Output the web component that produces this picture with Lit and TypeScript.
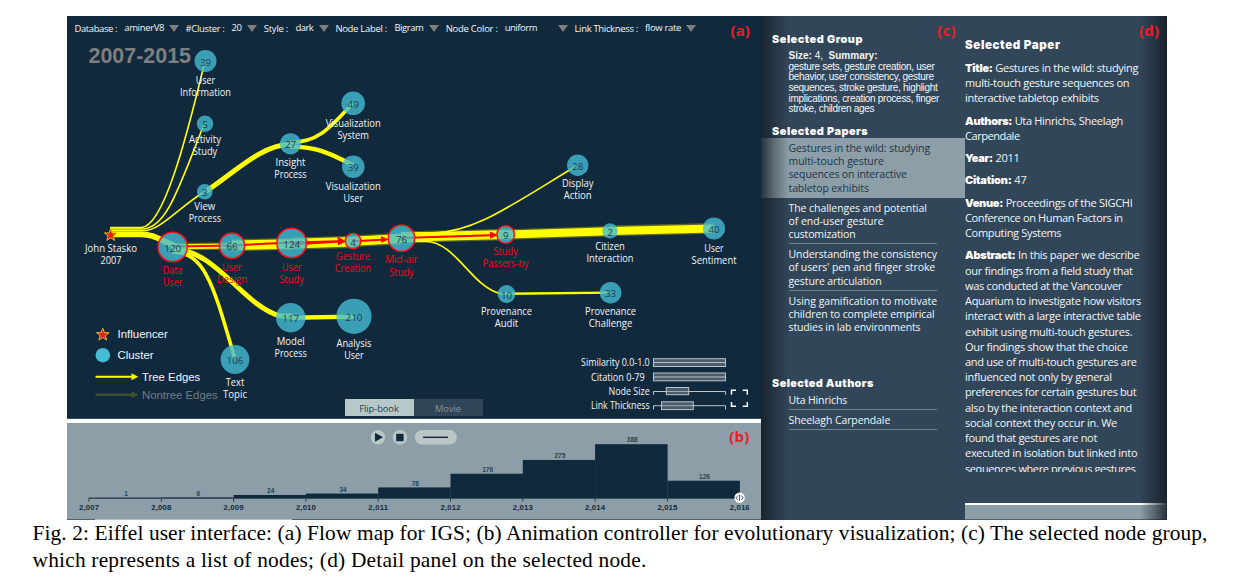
import { LitElement, html, svg, css } from 'lit';
import { customElement, property, query } from 'lit/decorators.js';

type Line = [string, number];

interface ClusterNode {
    n: number;
    x: number;
    y: number;
    r: number;
    label: Line[];
    labelY: number;
    selected?: boolean;
}

const filters = [
    { label: 'Database :', lw: 42.7, value: 'aminerV8', vw: 40, cell: 44.5, gap: 7 },
    { label: '#Cluster :', lw: 39, value: '20', vw: 10, cell: 15.5, gap: 7 },
    { label: 'Style :', lw: 24.3, value: 'dark', vw: 17.7, cell: 23, gap: 7.5 },
    { label: 'Node Label :', lw: 51.5, value: 'Bigram', vw: 29, cell: 34.5, gap: 7.5 },
    { label: 'Node Color :', lw: 52, value: 'uniform', vw: 32.3, cell: 53, gap: 7 },
    { label: 'Link Thickness :', lw: 63.5, value: 'flow rate', vw: 36, cell: 41.5, gap: 7 },
];

const nodes: ClusterNode[] = [
    { n: 39, x: 205.5, y: 61, r: 11, label: [['User', 19.5], ['Information', 51]], labelY: 84.3 },
    { n: 5, x: 205, y: 123.7, r: 8.2, label: [['Activity', 32], ['Study', 24.5]], labelY: 142.7 },
    { n: 3, x: 204.8, y: 191.7, r: 7.8, label: [['View', 21], ['Process', 32.3]], labelY: 210.3 },
    { n: 27, x: 290.5, y: 143.8, r: 10.6, label: [['Insight', 30], ['Process', 32.3]], labelY: 166 },
    { n: 49, x: 353.2, y: 103.3, r: 11.8, label: [['Visualization', 55], ['System', 31.5]], labelY: 126.7 },
    { n: 39, x: 353.3, y: 166.7, r: 11.3, label: [['Visualization', 55], ['User', 19.5]], labelY: 189.5 },
    { n: 28, x: 577.7, y: 165.3, r: 10.7, label: [['Display', 31.5], ['Action', 28]], labelY: 187 },
    { n: 120, x: 172.7, y: 247, r: 14.7, label: [['Data', 20], ['User', 19.5]], labelY: 274.3, selected: true },
    { n: 66, x: 232, y: 245.7, r: 12.6, label: [['User', 19.5], ['Design', 30]], labelY: 270.7, selected: true },
    { n: 124, x: 291.7, y: 243, r: 14.8, label: [['User', 19.5], ['Study', 24.5]], labelY: 270.9, selected: true },
    { n: 4, x: 353, y: 241, r: 7.8, label: [['Gesture', 34], ['Creation', 36.5]], labelY: 260.2, selected: true },
    { n: 76, x: 401.5, y: 238.2, r: 13.2, label: [['Mid-air', 32.5], ['Study', 24.5]], labelY: 263.4, selected: true },
    { n: 9, x: 505.7, y: 234.5, r: 8.8, label: [['Study', 24.5], ['Passers-by', 46]], labelY: 254.8, selected: true },
    { n: 2, x: 610, y: 230.9, r: 7.7, label: [['Citizen', 29.5], ['Interaction', 47]], labelY: 249.6 },
    { n: 40, x: 714, y: 228.4, r: 11, label: [['User', 19.5], ['Sentiment', 45]], labelY: 251.7 },
    { n: 10, x: 506.5, y: 294, r: 8.9, label: [['Provenance', 51], ['Audit', 23.5]], labelY: 314.5 },
    { n: 33, x: 610.6, y: 292.7, r: 10.8, label: [['Provenance', 51], ['Challenge', 43.5]], labelY: 315.3 },
    { n: 117, x: 290.7, y: 317.7, r: 14.7, label: [['Model', 28], ['Process', 32.3]], labelY: 345.2 },
    { n: 210, x: 354, y: 316.3, r: 17.6, label: [['Analysis', 35], ['User', 19.5]], labelY: 347.2 },
    { n: 106, x: 235, y: 359.5, r: 14.4, label: [['Text', 18.5], ['Topic', 24]], labelY: 386.3 },
];

// [path, stroke width]
const edges: Line[] = [
    ['M110 227.6 H141 C163 228 186 140 205 61', 1.6],
    ['M110 229 H142 C166 229 178 190 204.5 123', 1.6],
    ['M110 230.8 H143 C160 231 178 208 204 192', 1.6],
    ['M205 192 C235 172 262 144.5 290 144.5', 5],
    ['M290 142.5 C318 142.5 330 128 353 103', 3.6],
    ['M290 146.6 C318 146.6 330 154 353 165', 4.4],
    ['M110 234.3 H141 C156 234.3 160 241 180 248', 5.8],
    ['M172 249 C216 249 243 306 280 316 H292', 5],
    ['M172 252 C206 252 214 288 235 359', 3.6],
    ['M290 317.8 L354 316.6', 4.4],
    ['M401 233 H433 C475 232 510 206 577 165.5', 1.6],
    ['M401 241.5 H426 C455 241.5 472 287 500 293.5', 1.7],
    ['M500 293.8 L610 292.6', 2.4],
];

// the main stem, left to right
const stem: [number, number, number, number, number][] = [
    [173, 246.8, 232, 246, 5],
    [232, 245.2, 292, 244, 9.6],
    [292, 243.6, 353, 241.8, 9.6],
    [353, 241.2, 401, 238.6, 9],
    [401, 237.3, 506, 234.5, 9],
    [506, 234.5, 610, 231.2, 8],
    [610, 230.9, 714, 228.4, 8],
];

const history = [1, 6, 24, 34, 78, 176, 275, 388, 126];

const papers: Line[][] = [
    [['Gestures in the wild: studying', 141.5], ['multi-touch gesture', 95.3], ['sequences on interactive', 118.3], ['tabletop exhibits', 80.3]],
    [['The challenges and potential', 138.3], ['of end-user gesture', 95], ['customization', 67]],
    [['Understanding the consistency', 148.3], ["of users' pen and finger stroke", 146.7], ['gesture articulation', 93]],
    [['Using gamification to motivate', 148.7], ['children to complete empirical', 146], ['studies in lab environments', 132]],
];

const details: { key: string; lines: Line[] }[] = [
    { key: 'Title:', lines: [[' Gestures in the wild: studying', 173.3], ['multi-touch gesture sequences on', 164.3], ['interactive tabletop exhibits', 133.7]] },
    { key: 'Authors:', lines: [[' Uta Hinrichs, Sheelagh', 158], ['Carpendale', 54.7]] },
    { key: 'Year:', lines: [[' 2011', 54.5]] },
    { key: 'Citation:', lines: [[' 47', 61.5]] },
    { key: 'Venue:', lines: [[' Proceedings of the SIGCHI', 167.5], ['Conference on Human Factors in', 157.7], ['Computing Systems', 96.3]] },
    {
        key: 'Abstract:', lines: [
            [' In this paper we describe', 174.3],
            ['our findings from a field study that', 167.7],
            ['was conducted at the Vancouver', 157],
            ['Aquarium to investigate how visitors', 176],
            ['interact with a large interactive table', 175.7],
            ['exhibit using multi-touch gestures.', 167.3],
            ['Our findings show that the choice', 162.7],
            ['and use of multi-touch gestures are', 171.7],
            ['influenced not only by general', 146.7],
            ['preferences for certain gestures but', 171.3],
            ['also by the interaction context and', 167],
            ['social context they occur in. We', 152],
            ['found that gestures are not', 132],
            ['executed in isolation but linked into', 172.3],
            ['sequences where previous gestures', 170.3],
        ],
    },
];

// One line of text, tracked so that it fills the given width
@customElement('fit-line')
export class FitLine extends LitElement {
    static styles = css`
        :host {
            display: block;
            white-space: pre;
        }
        .inner {
            display: inline-block;
        }
    `;

    @property({ type: Number }) width = 0;
    @query('.inner') inner!: HTMLElement;

    firstUpdated() {
        const natural = this.inner.getBoundingClientRect().width;
        const count = (this.textContent || '').length;
        if (this.width && count) {
            this.style.letterSpacing = `${(this.width - natural) / count}px`;
        }
    }

    render() {
        return html`<span class="inner"><slot></slot></span>`;
    }
}

@customElement('flow-map')
export class FlowMap extends LitElement {
    static styles = css`
        :host {
            display: flex;
            flex-direction: column;
            position: relative;
            height: 403px;
            background: #11293d;
            border-bottom: 1px solid #3b4c5b;
            box-sizing: border-box;
            color: #f2f5f7;
            font-family: 'Open Sans', 'Noto Sans', sans-serif;
        }
        .toolbar {
            display: flex;
            height: 24px;
            padding-left: 7.5px;
            font-size: 9.5px;
            line-height: 25px;
            flex: none;
        }
        .filter {
            display: flex;
            align-items: flex-start;
            margin-right: 6.8px;
        }
        .value {
            margin-top: -0.7px;
        }
        .arrow {
            margin-top: 9px;
            border: 5px solid transparent;
            border-top: 7px solid #7e7e7e;
            border-bottom: 0;
        }
        svg {
            display: block;
            width: 694px;
            height: 378px;
            flex: none;
        }
        text {
            fill: #f2f5f7;
            font-size: 10.1px;
        }
        .edge {
            fill: none;
            stroke: #ffff00;
        }
        .ghost {
            stroke: #5c6626;
        }
        .disc {
            fill: #45bcd3;
            fill-opacity: 0.8;
        }
        .disc.selected {
            stroke: #f5141c;
            stroke-width: 1.6;
        }
        .count {
            fill: #17414f;
            text-anchor: middle;
            font-size: 9.8px;
        }
        .name {
            text-anchor: middle;
        }
        .name.selected {
            fill: #f00c16;
        }
        .route {
            stroke: #ff0000;
            stroke-width: 2;
            fill: none;
        }
        .head {
            fill: #ff0000;
        }
        .period {
            fill: #7f7f7f;
            font: bold 21.3px 'Liberation Sans', Arial, sans-serif;
        }
        .legend {
            font: 11.8px 'Liberation Sans', Arial, sans-serif;
        }
        .legend.off {
            fill: #747d84;
        }
        .tag {
            fill: #ee1c25;
            font-size: 15px;
            font-weight: 700;
        }
        .star {
            fill: #e32219;
            stroke: #e9b52c;
            stroke-width: 1;
        }
        .track {
            fill: none;
            stroke: #b9c4cb;
        }
        .thumb {
            fill: #7f8f9b;
            fill-opacity: 0.5;
            stroke: #b9c4cb;
        }
        .corner {
            fill: none;
            stroke: #ffffff;
            stroke-width: 1.5;
        }
        .modes {
            position: absolute;
            left: 277.5px;
            top: 382.7px;
            display: flex;
        }
        .mode {
            width: 69px;
            height: 17.3px;
            display: flex;
            justify-content: center;
            font-size: 9.4px;
            line-height: 19px;
            background: #314559;
            color: #8292a1;
        }
        .mode.active {
            background: #b7c8c8;
            color: #26404f;
        }
    `;

    renderNode(d: ClusterNode) {
        const cls = d.selected ? 'selected' : '';
        return svg`
            <circle class="disc ${cls}" cx=${d.x} cy=${d.y} r=${d.r}></circle>
            <text class="count" x=${d.x} y=${d.y + 4.6}>${d.n}</text>
            ${d.label.map(([t, w], i) => svg`
                <text class="name ${cls}" x=${d.x} y=${d.labelY + i * 12.1}
                    textLength=${w} lengthAdjust="spacingAndGlyphs">${t}</text>`)}
        `;
    }

    renderText(t: string, x: number, y: number, w: number, cls = '') {
        return svg`<text class=${cls} x=${x} y=${y} textLength=${w} lengthAdjust="spacingAndGlyphs">${t}</text>`;
    }

    renderStar(x: number, y: number) {
        return svg`<path class="star" transform="translate(${x} ${y})"
            d="M0 -6.5 L1.6 -2.1 L6.3 -2 L2.6 0.9 L3.9 5.4 L0 2.8 L-3.9 5.4 L-2.6 0.9 L-6.3 -2 L-1.6 -2.1 Z"></path>`;
    }

    render() {
        return html`
            <div class="toolbar">
                ${filters.map(f => html`
                    <div class="filter">
                        <fit-line .width=${f.lw} style="width:${f.lw + f.gap}px">${f.label}</fit-line>
                        <fit-line class="value" .width=${f.vw} style="width:${f.cell}px">${f.value}</fit-line>
                        <div class="arrow"></div>
                    </div>`)}
            </div>
            <svg viewBox="67 40 694 378" overflow="visible">
                ${this.renderText('2007-2015', 88.5, 62.7, 102.5, 'period')}
                ${this.renderText('(a)', 730.5, 35.6, 19.5, 'tag')}
                ${stem.map(([x1, y1, x2, y2, w]) => svg`
                    <line class="ghost" x1=${x1} y1=${y1} x2=${x2} y2=${y2} stroke-width=${w + 2.6}></line>`)}
                ${edges.map(([d, w]) => svg`<path class="edge" d=${d} stroke-width=${w}></path>`)}
                ${stem.map(([x1, y1, x2, y2, w]) => svg`
                    <line class="edge" x1=${x1} y1=${y1} x2=${x2} y2=${y2} stroke-width=${w}></line>`)}
                <path class="route" d="M173 246.5 L232 245.4 L292 242.4 L340 241.2 M292 244.4 L340 241.6"></path>
                <path class="route" d="M353 241.2 L382 239.8 M401 238 L491 235.3"></path>
                <path class="head" d="M337.5 236.5 L346 241.2 L338 245.5 Z"></path>
                <path class="head" d="M381 236 L388.5 239.5 L381.3 243 Z"></path>
                <path class="head" d="M490 231.4 L498 235 L490 238.8 Z"></path>
                ${nodes.map(d => this.renderNode(d))}
                ${this.renderStar(110.7, 235)}
                ${this.renderText('John Stasko', 85, 252.3, 52, '')}
                ${this.renderText('2007', 100.5, 264.4, 21, '')}

                ${this.renderStar(102.8, 334.7)}
                ${this.renderText('Influencer', 117.5, 337.8, 50.3, 'legend')}
                <circle cx="102.8" cy="355.2" r="7.3" fill="#45bcd3"></circle>
                ${this.renderText('Cluster', 117.5, 359.3, 36, 'legend')}
                <path class="edge" d="M95.5 376.8 H133" stroke-width="2"></path>
                <path d="M131.5 373.3 L138.3 376.8 L131.5 380.3 Z" fill="#ffff00"></path>
                ${this.renderText('Tree Edges', 142, 381, 58.3, 'legend')}
                <path class="ghost" d="M95.5 394.8 H133" stroke-width="2" opacity="0.75"></path>
                <path d="M131.5 391.3 L138.3 394.8 L131.5 398.3 Z" fill="#46532b"></path>
                ${this.renderText('Nontree Edges', 142, 398.7, 75.7, 'legend off')}

                ${this.renderText('Similarity 0.0-1.0', 581, 366.2, 68.7)}
                ${this.renderText('Citation 0-79', 591, 380.6, 53.7)}
                ${this.renderText('Node Size', 608.5, 395, 41.2)}
                ${this.renderText('Link Thickness', 591, 409.3, 58.7)}
                <rect class="thumb" x="653.5" y="358.7" width="72" height="7.8"></rect>
                <path class="track" d="M653.5 362.5 H725.5"></path>
                <rect class="thumb" x="653.5" y="373" width="72" height="7.8"></rect>
                <path class="track" d="M653.5 377 H725.5"></path>
                <path class="track" d="M653.5 394.8 V391.5 H725.5 V394.8"></path>
                <rect class="thumb" x="666.3" y="387.5" width="22.4" height="7.2"></rect>
                <path class="track" d="M653.5 409.5 V405.7 H725.5 V409.5"></path>
                <rect class="thumb" x="661.5" y="401.8" width="31.8" height="7.8"></rect>
                <path class="corner" d="M731.5 394.8 V390.3 H736 M742.8 390.3 H747.3 V394.8 M747.3 402 V406.3 H742.8 M736 406.3 H731.5 V402"></path>
            </svg>
            <div class="modes">
                <div class="mode active"><fit-line .width=${39.5}>Flip-book</fit-line></div>
                <div class="mode"><fit-line .width=${26}>Movie</fit-line></div>
            </div>
        `;
    }
}

@customElement('time-line')
export class TimeLine extends LitElement {
    static styles = css`
        :host {
            display: block;
            height: 97px;
            background: #8c9fa8;
        }
        svg {
            display: block;
            width: 694px;
            height: 97px;
        }
        .bar {
            fill: #11293d;
        }
        .axis {
            fill: none;
            stroke: #2c4353;
        }
        .knob {
            fill: #b9c8c7;
        }
        text {
            fill: #14293b;
            text-anchor: middle;
            font-family: 'Liberation Sans', Arial, sans-serif;
        }
        .num {
            font-size: 6.6px;
            font-weight: bold;
            fill: #2a3f4f;
        }
        .year {
            font-size: 7.8px;
            font-weight: bold;
        }
        .tag {
            fill: #ee1c25;
            font: 700 15px 'Open Sans', sans-serif;
        }
    `;

    render() {
        const x0 = 89;
        const step = 72.3;
        return html`
            <svg viewBox="67 423 694 97">
                ${history.map((n, i) => {
                    const h = Math.max(n * 0.1395, 0.6);
                    return svg`
                        <rect class="bar" x=${x0 + i * step} y=${498.3 - h} width=${step + 0.2} height=${h}></rect>
                        <text class="num" x=${x0 + (i + 0.5) * step + 1} y=${496.4 - h}>${n}</text>`;
                })}
                <path class="axis" d="M89 498.3 H740"></path>
                ${Array.from({ length: 10 }, (_, i) => svg`
                    <path class="axis" d="M${x0 + i * step} 497.8 v4"></path>
                    <text class="year" x=${x0 + i * step} y="509.6"
                        textLength="20">${(2007 + i).toLocaleString('en-US')}</text>`)}
                <circle class="knob" cx="378" cy="437.3" r="7.2"></circle>
                <path class="bar" d="M375 432.8 L383 437.3 L375 441.8 Z"></path>
                <circle class="knob" cx="400" cy="437.3" r="7.2"></circle>
                <rect class="bar" x="396.2" y="433.8" width="7.4" height="7.4"></rect>
                <rect class="knob" x="414.8" y="430" width="42" height="14.6" rx="7.3"></rect>
                <path d="M423 437.3 H448" stroke="#11293d" stroke-width="1.4"></path>
                <circle cx="739.6" cy="497.7" r="5.2" fill="#fff"></circle>
                <path d="M738 495.5 L736 497.7 L738 499.9 M741.2 495.5 L743.2 497.7 L741.2 499.9 M739.6 494.7 V500.7"
                    fill="none" stroke="#2c4353" stroke-width="0.9"></path>
                <text class="tag" x="739.3" y="442" textLength="20.3">(b)</text>
                <path d="M67 519.5 H761" stroke="#52646f"></path>
                <path d="M95 519.5 H292" stroke="#b4c0c4"></path>
            </svg>
        `;
    }
}

@customElement('group-panel')
export class GroupPanel extends LitElement {
    static styles = css`
        :host {
            display: block;
            position: relative;
            width: 204px;
            height: 504px;
            box-sizing: border-box;
            padding-top: 16px;
            background: #314659;
            color: #f4f6f8;
            font: 10.5px/13.33px 'Open Sans', 'Noto Sans', sans-serif;
            overflow: hidden;
        }
        .heading {
            height: 14px;
            line-height: 14px;
            padding-left: 11px;
            font-family: Inter, sans-serif;
            font-size: 10.9px;
            font-weight: 900;
            color: #fff;
        }
        .size,
        .summary {
            padding-left: 27.5px;
            font-family: 'Liberation Sans', Arial, sans-serif;
            font-size: 10px;
        }
        .size {
            margin-top: 3.5px;
            line-height: 12px;
        }
        .summary {
            line-height: 10.67px;
            margin-bottom: 9px;
        }
        .item {
            margin-left: 27.5px;
            margin-right: 28px;
            padding: 4.1px 0 1.4px;
            border-bottom: 1px solid #71828f;
        }
        .item.active {
            margin: 0;
            padding: 3.8px 0 2.6px 27.5px;
            border: 0;
            background: #8c9fa8;
            color: #1c3448;
        }
        .item.last {
            border: 0;
        }
        .authors {
            margin-top: 40px;
        }
        .shade {
            position: absolute;
            inset: 0 auto 0 0;
            width: 28px;
            background: linear-gradient(90deg, rgba(20, 28, 36, 0.85), rgba(20, 28, 36, 0.4) 45%, rgba(20, 28, 36, 0));
        }
        .heading,
        .item fit-line {
            position: relative;
            z-index: 1;
        }
        .tag {
            position: absolute;
            left: 176px;
            top: 4px;
            font-size: 15px;
            font-weight: 700;
            line-height: 20px;
            color: #ee1c25;
        }
    `;

    render() {
        const summary: Line[] = [
            ['gesture sets, gesture creation, user', 146],
            ['behavior, user consistency, gesture', 145.3],
            ['sequences, stroke gesture, highlight', 149],
            ['implications, creation process, finger', 150.5],
            ['stroke, children ages', 85.7],
        ];
        const row = ([t, w]: Line) => html`<fit-line .width=${w}>${t}</fit-line>`;
        return html`
            <div class="shade"></div>
            <div class="heading"><fit-line .width=${91}>Selected Group</fit-line></div>
            <div class="size"><fit-line .width=${89}><b>Size:</b> 4,  <b>Summary:</b></fit-line></div>
            <div class="summary">${summary.map(row)}</div>
            <div class="heading"><fit-line .width=${96.3}>Selected Papers</fit-line></div>
            ${papers.map((p, i) => html`
                <div class="item ${i === 0 ? 'active' : ''} ${i === papers.length - 1 ? 'last' : ''}">${p.map(row)}</div>`)}
            <div class="heading authors"><fit-line .width=${101.7}>Selected Authors</fit-line></div>
            <div class="item">${row(['Uta Hinrichs', 58.7])}</div>
            <div class="item">${row(['Sheelagh Carpendale', 101.7])}</div>
            <div class="tag"><fit-line .width=${19}>(c)</fit-line></div>
        `;
    }
}

@customElement('detail-panel')
export class DetailPanel extends LitElement {
    static styles = css`
        :host {
            display: flex;
            flex-direction: column;
            position: relative;
            width: 202px;
            height: 504px;
            box-sizing: border-box;
            padding-top: 21px;
            background: #314659;
            color: #f4f6f8;
            font: 11px/15.22px 'Open Sans', 'Noto Sans', sans-serif;
        }
        .heading,
        b {
            font-family: Inter, sans-serif;
            font-weight: 900;
            color: #fff;
        }
        .heading {
            font-size: 11.6px;
            line-height: 16px;
        }
        b {
            font-size: 11px;
            line-height: 0;
        }
        .body {
            display: flex;
            flex-direction: column;
            gap: 7.1px;
            height: 412.5px;
            margin-top: 6.8px;
            overflow: hidden;
        }
        .field {
            flex: none;
        }
        .field fit-line {
            height: 15.22px;
        }
        .strip {
            height: 14px;
            margin-top: auto;
            background: #8c9fa8;
            border-top: 2.5px solid #fff;
            border-bottom: 1px solid #52646f;
        }
        .shade {
            position: absolute;
            inset: 0 0 0 auto;
            width: 27px;
            background: linear-gradient(270deg, rgba(20, 28, 36, 0.85), rgba(20, 28, 36, 0.45) 45%, rgba(20, 28, 36, 0));
        }
        .tag {
            position: absolute;
            left: 174px;
            top: 4px;
            font-size: 15px;
            font-weight: 700;
            line-height: 20px;
            color: #ee1c25;
        }
    `;

    render() {
        return html`
            <div class="heading"><fit-line .width=${95.5}>Selected Paper</fit-line></div>
            <div class="body">
                ${details.map(d => html`
                    <div class="field">
                        ${d.lines.map(([t, w], i) => html`<fit-line .width=${w}>${i === 0 ? html`<b>${d.key}</b>` : ''}${t}</fit-line>`)}
                    </div>`)}
            </div>
            <div class="strip"></div>
            <div class="shade"></div>
            <div class="tag"><fit-line .width=${20.3}>(d)</fit-line></div>
        `;
    }
}

@customElement('app-root')
export class AppRoot extends LitElement {
    static styles = css`
        :host {
            display: block;
            width: 1236px;
            height: 582px;
            box-sizing: border-box;
            padding-top: 16px;
            background: #fff;
            overflow: hidden;
        }
        .figure {
            display: flex;
            margin-left: 67px;
            height: 504px;
        }
        .left {
            display: flex;
            flex-direction: column;
            justify-content: space-between;
            width: 694px;
        }
        .caption {
            padding-left: 32.5px;
            color: #000;
            font: 21.4px/27px 'Liberation Serif', 'Times New Roman', serif;
        }
    `;

    render() {
        return html`
            <div class="figure">
                <div class="left">
                    <flow-map></flow-map>
                    <time-line></time-line>
                </div>
                <group-panel></group-panel>
                <detail-panel></detail-panel>
            </div>
            <div class="caption">
                <fit-line .width=${1175}>Fig. 2: Eiffel user interface: (a) Flow map for IGS; (b) Animation controller for evolutionary visualization; (c) The selected node group,</fit-line>
                <fit-line .width=${614}>which represents a list of nodes; (d) Detail panel on the selected node.</fit-line>
            </div>
        `;
    }
}
